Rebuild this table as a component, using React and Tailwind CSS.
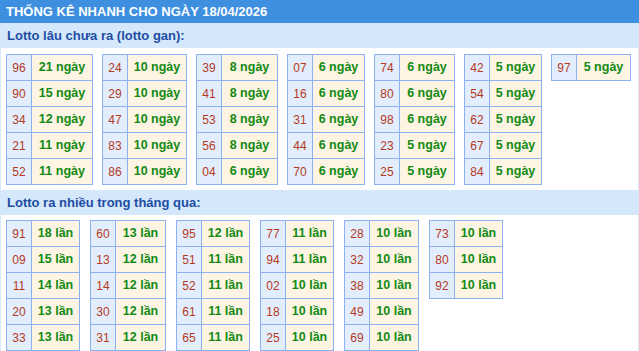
import React from 'react'

const gan = [
  { nw: 59, rows: [['96', '21 ngày'], ['90', '15 ngày'], ['34', '12 ngày'], ['21', '11 ngày'], ['52', '11 ngày']] },
  { nw: 57, rows: [['24', '10 ngày'], ['29', '10 ngày'], ['47', '10 ngày'], ['83', '10 ngày'], ['86', '10 ngày']] },
  { nw: 54, rows: [['39', '8 ngày'], ['41', '8 ngày'], ['53', '8 ngày'], ['56', '8 ngày'], ['04', '6 ngày']] },
  { nw: 50, rows: [['07', '6 ngày'], ['16', '6 ngày'], ['31', '6 ngày'], ['44', '6 ngày'], ['70', '6 ngày']] },
  { nw: 53, rows: [['74', '6 ngày'], ['80', '6 ngày'], ['98', '6 ngày'], ['23', '5 ngày'], ['25', '5 ngày']] },
  { nw: 50, rows: [['42', '5 ngày'], ['54', '5 ngày'], ['62', '5 ngày'], ['67', '5 ngày'], ['84', '5 ngày']] },
  { nw: 52, rows: [['97', '5 ngày']] },
]

const nhieu = [
  { nw: 46, rows: [['91', '18 lần'], ['09', '15 lần'], ['11', '14 lần'], ['20', '13 lần'], ['33', '13 lần']] },
  { nw: 48, rows: [['60', '13 lần'], ['13', '12 lần'], ['14', '12 lần'], ['30', '12 lần'], ['31', '12 lần']] },
  { nw: 46, rows: [['95', '12 lần'], ['51', '11 lần'], ['52', '11 lần'], ['61', '11 lần'], ['65', '11 lần']] },
  { nw: 46, rows: [['77', '11 lần'], ['94', '11 lần'], ['02', '10 lần'], ['18', '10 lần'], ['25', '10 lần']] },
  { nw: 47, rows: [['28', '10 lần'], ['32', '10 lần'], ['38', '10 lần'], ['49', '10 lần'], ['69', '10 lần']] },
  { nw: 46, rows: [['73', '10 lần'], ['80', '10 lần'], ['92', '10 lần']] },
]

function LottoTable({ data }) {
  return (
    <div className="border border-[#8cb1f0] divide-y divide-[#8cb1f0] shrink-0">
      {data.rows.map(([num, val]) => (
        <div key={num} className="flex box-content h-[25px] divide-x divide-[#8cb1f0]">
          <div className="w-[25px] flex items-center justify-center bg-[#e2eefd] text-[12px] text-[#b5391c]">
            {num}
          </div>
          <div
            className="flex items-center justify-center bg-[#fef4e4] text-[12.5px] font-bold text-[#138a13]"
            style={{ width: data.nw + 1 }}
          >
            {val}
          </div>
        </div>
      ))}
    </div>
  )
}

function Section({ title, tables, gap, pad }) {
  return (
    <div>
      <div className="h-[25px] bg-[#d4e7fb] flex items-center px-[6px] text-[13px] font-bold text-[#1d4ea3]">
        {title}
      </div>
      <div className={`flex items-start pl-[5px] pb-[5px] ${pad} ${gap}`}>
        {tables.map((t, i) => (
          <LottoTable key={i} data={t} />
        ))}
      </div>
    </div>
  )
}

export default function App() {
  return (
    <div
      className="w-[639px] h-[351px] overflow-hidden bg-white"
      style={{ fontFamily: '"Liberation Sans", Arial, sans-serif' }}
    >
      <div className="h-[23px] bg-[#3e8fe0] flex items-center px-[6px] text-[13px] font-bold text-white">
        THỐNG KÊ NHANH CHO NGÀY 18/04/2026
      </div>
      <div className="border-x border-[#d4e7fb]">
        <Section title="Lotto lâu chưa ra (lotto gan):" tables={gan} gap="gap-[9px]" pad="pt-[6px]" />
        <Section title="Lotto ra nhiều trong tháng qua:" tables={nhieu} gap="gap-[10px]" pad="pt-[5px]" />
      </div>
    </div>
  )
}
